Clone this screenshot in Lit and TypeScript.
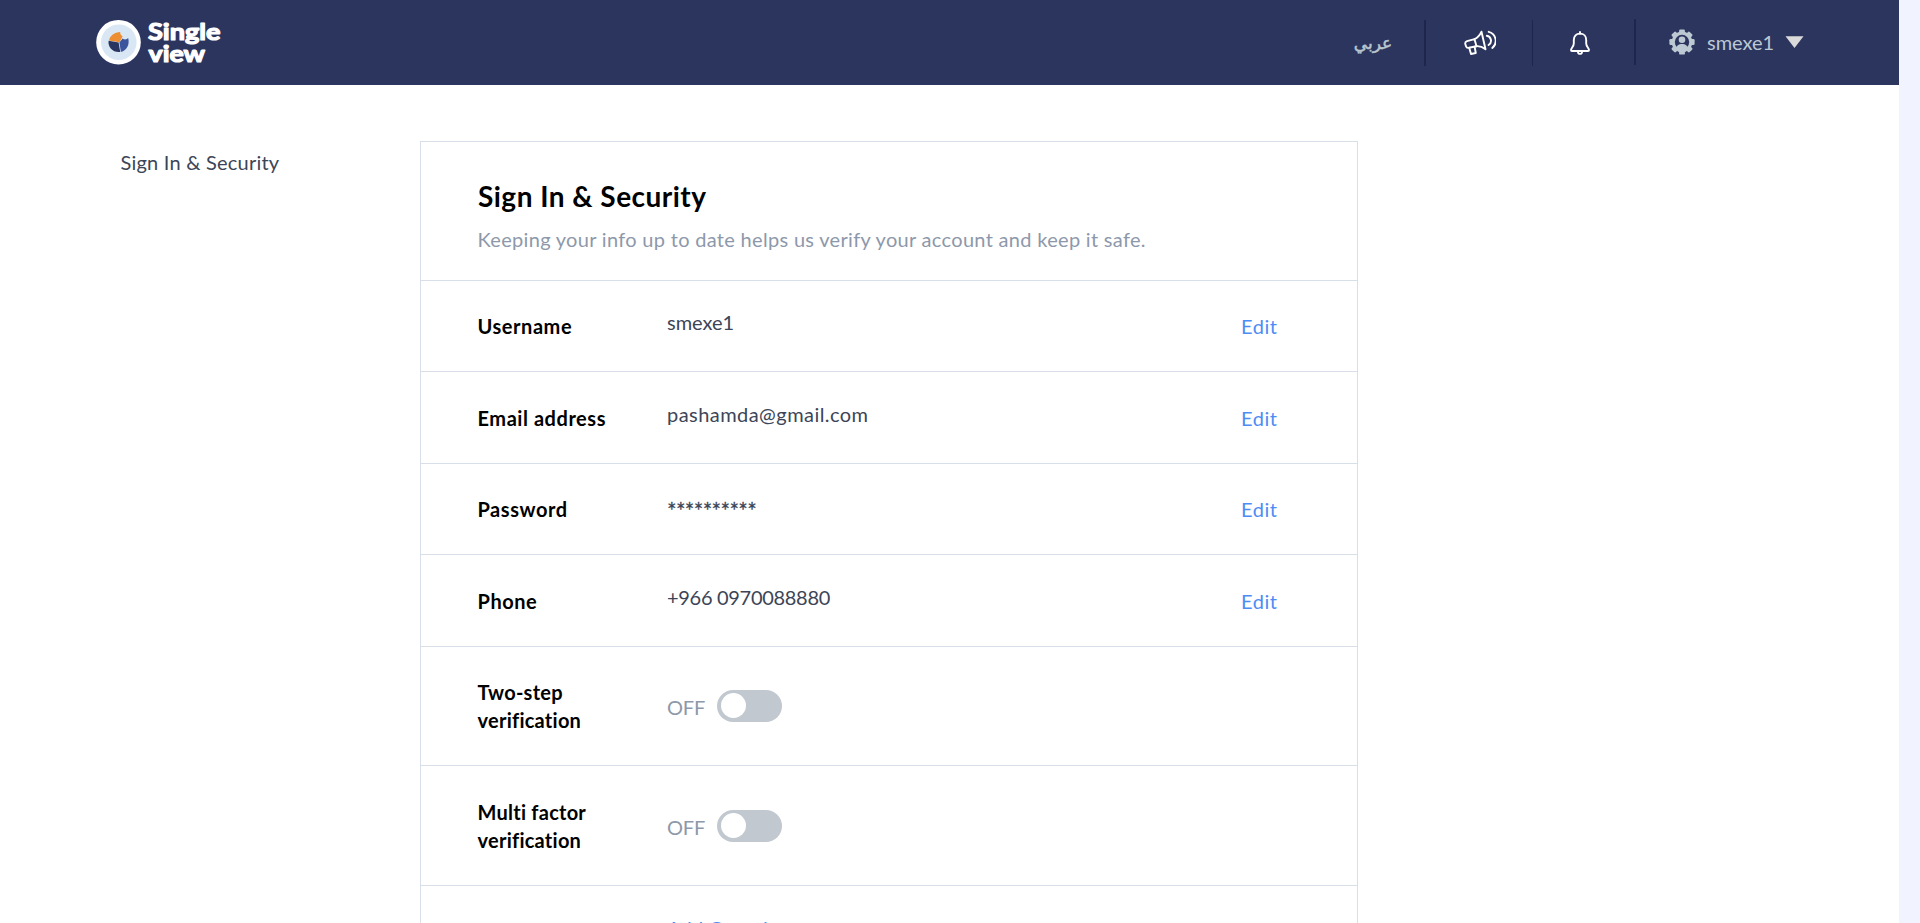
import { LitElement, html, css, svg } from 'lit';
import { customElement, property } from 'lit/decorators.js';

@customElement('toggle-switch')
class ToggleSwitch extends LitElement {
  @property({ type: Boolean }) on = false;
  static styles = css`
    :host { display: block; }
    .track { box-sizing: border-box; width: 65px; height: 32px; padding: 3px 4px; border-radius: 16px; background: #c2c8d0; display: flex; align-items: flex-start; }
    .track.on { background: #4e8cf5; justify-content: flex-end; }
    .knob { width: 25px; height: 25px; border-radius: 50%; background: #fff; }
  `;
  render() {
    return html`<div class="track ${this.on ? 'on' : ''}"><div class="knob"></div></div>`;
  }
}

@customElement('app-header')
class AppHeader extends LitElement {
  static styles = css`
    :host { display: block; }
    .bar { height: 85px; background: #2c355e; display: flex; align-items: flex-start; justify-content: space-between; box-sizing: border-box; padding-left: 94px; }
    .logo { display: block; width: 140px; height: 85px; }
    .nav { display: flex; align-items: flex-start; height: 85px; }
    .seg { height: 46px; margin-top: 20px; display: flex; align-items: center; justify-content: center; box-sizing: border-box; }
    .lang { width: 104px; border-right: 2px solid #1e264e; color: #b9c6cf; font: 17px/30px "DejaVu Sans", sans-serif; -webkit-text-stroke: 0.500px #b9c6cf; }
    .news { width: 107px; border-right: 1px solid #1e264e; padding-left: 2px; }
    .bell { width: 103px; border-right: 2px solid #1e264e; margin-top: 19px; padding: 1px 7px 0 0; }
    .user { width: 263px; justify-content: flex-start; padding-left: 33px; color: #bcc8d4; font: 20px/28px Lato, sans-serif; margin-top: 19px; }
    .name { margin-left: 12px; padding-bottom: 1px; letter-spacing: 0; }
    .caret { margin-left: 11px; }
    .ic { display: block; }
  `;
  render() {
    const teeth = [0, 45, 90, 135, 180, 225, 270, 315];
    return html`<div class="bar">
      <svg class="logo" viewBox="94 0 140 85" aria-label="Single view">
        <circle cx="118.5" cy="42.2" r="22.3" fill="#fff" />
        <circle cx="118.8" cy="42.2" r="17.8" fill="#d9e6f3" />
        <path d="M109 40.6C110 35.5 114.500 32 120.200 32C120 34 121 35.500 122.600 36.400L119.400 42.200Z" fill="#ec8e31" />
        <path d="M119.400 42.400L122.600 38.600C124.500 40 127 39.600 128.200 38C129.800 44.500 127 50.500 120.900 51.900Z" fill="#3a559b" />
        <path d="M108.600 40.800L118.600 42.600L120.200 52C113 52.800 107.600 47.400 108.600 40.800Z" fill="#2a3461" />
        <g fill="#fff" stroke="#fff" stroke-width="1.200" stroke-linejoin="round" font-family="Lato, sans-serif" font-weight="700" font-size="23">
          <text x="148" y="40.200" textLength="72.500" lengthAdjust="spacingAndGlyphs">Single</text>
          <text x="148.600" y="62.200" textLength="56.500" lengthAdjust="spacingAndGlyphs">view</text>
        </g>
      </svg>
      <div class="nav">
        <div class="seg lang" dir="rtl" lang="ar">عربي</div>
        <div class="seg news">
          <svg class="ic" width="32" height="26" viewBox="1465 31 32 26" fill="none" stroke="#fff" stroke-width="1.900" stroke-linejoin="round" stroke-linecap="round">
            <path d="M1475.500 40.200L1468 42.200Q1465.800 43 1466.300 45L1467 47.300Q1467.600 49.200 1469.800 48.800L1477.500 47.200L1475.500 40.200" />
            <path d="M1475.500 40.200Q1480 38.200 1482.500 32.700L1486.500 50.200Q1482 46.800 1477.500 47.200" />
            <path d="M1470.300 48.900L1472 55L1476.800 54L1475.600 47.800" />
            <path d="M1487.800 36.800A5 5 0 0 1 1489.600 46M1489.700 32.800A9.300 9.300 0 0 1 1493.300 49" />
          </svg>
        </div>
        <div class="seg bell">
          <svg class="ic" width="20" height="24" viewBox="0 0 20 24" fill="none" stroke="#fff" stroke-width="1.900" stroke-linejoin="round" stroke-linecap="round">
            <path d="M10 1V2.600M10 2.600C6.200 2.600 3.800 5.200 3.800 9V12.500C3.800 15.500 1 17 1 19C1 19.700 1.500 20 2 20H18C18.500 20 19 19.700 19 19C19 17 16.200 15.500 16.200 12.500V9C16.200 5.200 13.800 2.600 10 2.600Z" />
            <path d="M8 21C8 23.500 12 23.500 12 21" />
          </svg>
        </div>
        <div class="seg user">
          <svg class="ic" width="26" height="26" viewBox="-13 -13 26 26">
            <g fill="#bcc8d2">
              ${teeth.map(a => svg`<rect x="-2.900" y="-12.600" width="5.800" height="6" rx="1.200" transform="rotate(${a})" />`)}
              <circle r="10.400" />
            </g>
            <circle r="7.200" fill="#2c355e" />
            <circle cy="-2.200" r="3.300" fill="#bcc8d2" />
            <path d="M-5.800 8C-5.800 3.500 -3.500 2 0 2S5.800 3.500 5.800 8Z" fill="#bcc8d2" />
          </svg>
          <span class="name">smexe1</span>
          <svg class="ic caret" width="19" height="12" viewBox="0 0 19 12"><path d="M0.500 0.300H18.500L9.500 12Z" fill="#dadada" /></svg>
        </div>
      </div>
    </div>`;
  }
}

@customElement('app-root')
class AppRoot extends LitElement {
  static styles = css`
    :host { display: block; height: 923px; overflow: hidden; background: #f1f4fe; font: 20px/28px Lato, sans-serif; color: #3c4557; }
    .page { width: 1899px; height: 923px; overflow: hidden; background: #fff; }
    .body { display: flex; align-items: flex-start; padding-top: 56px; }
    .side { width: 420px; box-sizing: border-box; padding: 7px 0 0 120.500px; letter-spacing: 0.220px; }
    .card { width: 938px; box-sizing: border-box; border: 1px solid #d9dfe8; }
    .head { height: 137.750px; padding: 35px 57px 0; box-sizing: border-box; }
    .title { margin: 0; font-size: 28px; line-height: 38px; font-weight: 700; letter-spacing: 0.480px; color: #000; }
    .sub { margin: 0; padding-top: 10px; color: #8d98aa; letter-spacing: 0.310px; margin-left: -0.500px; }
    .row { display: grid; grid-template-columns: 189px 1fr 116px; align-items: center; border-top: 1px solid #d9dfe8; padding: 31.250px 0 31.250px 57px; }
    .label { font-weight: 700; color: #000; letter-spacing: 0.550px; width: 150px; margin-left: -0.500px; }
    .label.two { letter-spacing: 0.250px; width: 120px; }
    .value { padding-bottom: 4px; margin: -4px 0 0; }
    .mail { letter-spacing: 0.450px; }
    .phone { letter-spacing: -0.300px; }
    .stars { font-size: 22.500px; letter-spacing: -0.650px; padding: 2px 0 0; margin: 0 0 -2px; -webkit-text-stroke: 0.300px #3c4557; }
    .off { display: flex; align-items: center; gap: 12px; color: #8d98aa; margin: -4px 0; }
    .state { padding-top: 2px; letter-spacing: -0.200px; }
    .link { color: #4e8cf5; letter-spacing: 0.550px; }
    .add { margin-top: -3px; letter-spacing: 0.200px; }
  `;
  private rows = [
    { label: 'Username', value: 'smexe1', kind: '' },
    { label: 'Email address', value: 'pashamda@gmail.com', kind: 'mail' },
    { label: 'Password', value: '**********', kind: 'stars' },
    { label: 'Phone', value: '+966 0970088880', kind: 'phone' },
  ];
  render() {
    return html`<div class="page">
      <app-header></app-header>
      <div class="body">
        <div class="side">Sign In &amp; Security</div>
        <div class="card">
          <div class="head">
            <h1 class="title">Sign In &amp; Security</h1>
            <p class="sub">Keeping your info up to date helps us verify your account and keep it safe.</p>
          </div>
          ${this.rows.map(r => html`<div class="row">
            <div class="label">${r.label}</div>
            <div class="value ${r.kind}">${r.value}</div>
            <div class="link">Edit</div>
          </div>`)}
          ${['Two-step verification', 'Multi factor verification'].map(l => html`<div class="row">
            <div class="label two">${l}</div>
            <div class="off"><span class="state">OFF</span><toggle-switch></toggle-switch></div>
          </div>`)}
          <div class="row">
            <div></div>
            <div class="link add">Add Question</div>
          </div>
        </div>
      </div>
    </div>`;
  }
}
